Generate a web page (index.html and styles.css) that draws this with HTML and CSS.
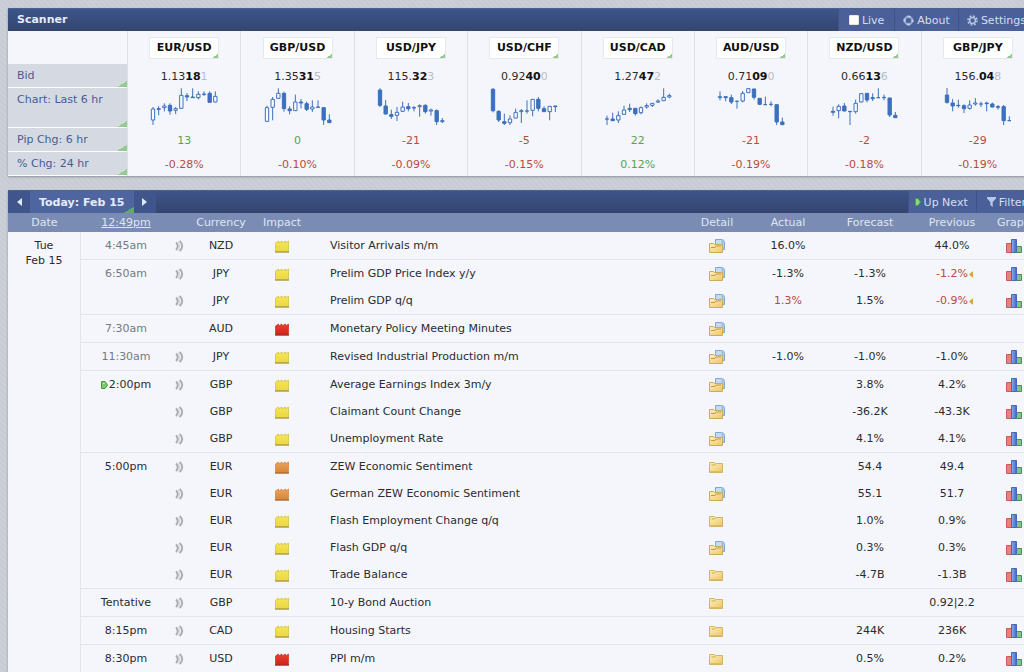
FILE: index.html
```html
<!DOCTYPE html>
<html lang="en">
<head>
<meta charset="utf-8">
<title>Economic Calendar</title>
<link rel="stylesheet" href="styles.css">
</head>
<body>
<svg class="defs" aria-hidden="true">
  <defs>
    <linearGradient id="g-folder" x1="0" y1="0" x2="1" y2="1"><stop offset="0" stop-color="#fdf0bd"/><stop offset="1" stop-color="#ecc765"/></linearGradient>
    <linearGradient id="g-low" x1="0" y1="0" x2="0" y2="1"><stop offset="0" stop-color="#f8ee7c"/><stop offset=".3" stop-color="#f2e24c"/><stop offset="1" stop-color="#e9d648"/></linearGradient>
    <linearGradient id="g-med" x1="0" y1="0" x2="0" y2="1"><stop offset="0" stop-color="#eda35c"/><stop offset="1" stop-color="#d98436"/></linearGradient>
    <linearGradient id="g-high" x1="0" y1="0" x2="0" y2="1"><stop offset="0" stop-color="#ea4034"/><stop offset="1" stop-color="#cf2318"/></linearGradient>
    <linearGradient id="g-blue" x1="0" y1="0" x2="1" y2="0"><stop offset="0" stop-color="#8fb0f0"/><stop offset="1" stop-color="#3f65c6"/></linearGradient>
    <symbol id="low" viewBox="0 0 14 13"><path d="M.5 3 3.500 1v2L7 1v2l3.500-2v2l3-2V12H.5z" fill="url(#g-low)" stroke="#d3c24a" stroke-width=".8"/><path d="M0 12h14" stroke="#96893a"/></symbol>
    <symbol id="med" viewBox="0 0 14 13"><path d="M.5 3 3.500 1v2L7 1v2l3.500-2v2l3-2V12H.5z" fill="url(#g-med)" stroke="#d08a48" stroke-width=".8"/><path d="M0 12h14" stroke="#96602c"/></symbol>
    <symbol id="high" viewBox="0 0 14 13"><path d="M.5 3 3.500 1v2L7 1v2l3.500-2v2l3-2V12H.5z" fill="url(#g-high)" stroke="#d2372b" stroke-width=".8"/><path d="M0 12h14" stroke="#8f2a22"/></symbol>
    <symbol id="sound" viewBox="0 0 9 12"><path d="M1 2.500q3.500 3.500 0 7.500M4.700.8q5 5.200 0 10.400" fill="none" stroke="#a9abb0" stroke-width="1.900"/><path d="M3 1.800q3.400 4.200 0 8.600" fill="none" stroke="#d0d2d6"/></symbol>
    <symbol id="folder" viewBox="0 0 16 16"><path d="M.5 13.500v-10h5l1 1h7v9z" fill="url(#g-folder)" stroke="#d2b268"/><path d="M2.500 6h3l1-1" fill="none" stroke="#c9a657"/><path d="M1.500 12.500h11" stroke="#e0b95a"/></symbol>
    <symbol id="folder-doc" viewBox="0 0 16 16"><path d="M6.500 1.500h6q3 0 3 3v7h-9z" fill="#c3dcf5" stroke="#87a5cc"/><path d="M13.500 2v9" stroke="#9cbce2" stroke-width="2"/><path d="M.5 14.500v-9h4l1 1h8v8z" fill="url(#g-folder)" stroke="#cda95c"/><path d="M2 9.500h4l1-1.500h5" fill="none" stroke="#bf9a4c"/></symbol>
    <symbol id="graph" viewBox="0 0 16 14"><path d="M.5 4.500h5v9h-5z" fill="#e4827f" stroke="#c95a5b"/><path d="M10.500 7.500h5v6h-5z" fill="#83c28d" stroke="#4f8a62"/><path d="M5.500.5h5v13h-5z" fill="url(#g-blue)" stroke="#4568b8"/></symbol>
    <symbol id="up-next" viewBox="0 0 7 8"><path d="M.5.500H4L6.500 4 4 7.500H.500z" fill="#7cc96a" stroke="#459c3d"/><path d="M2 2.500h1.500" stroke="#d4f0cb"/></symbol>
    <symbol id="revised" viewBox="0 0 4 7"><path d="M4 0v7L0 3.500z" fill="#dba141"/></symbol>
  </defs>
</svg>

<main class="page">
  <section class="panel">
    <header class="bar">
      <h2 class="bar-title">Scanner</h2>
      <div class="bar-actions">
        <label class="action action-live"><input type="checkbox" class="tick">Live</label>
        <button type="button" class="action"><svg class="glyph" viewBox="0 0 12 12"><circle cx="6" cy="6" r="4" fill="none" stroke="#8fa4d0" stroke-width="2.500"/><circle cx="6" cy="6" r="4.500" fill="none" stroke="#c3d0ea" stroke-width="2" stroke-dasharray="3.500 3.568" stroke-dashoffset="1.750"/></svg>About</button>
        <button type="button" class="action"><svg class="glyph" viewBox="0 0 12 12"><circle cx="6" cy="6" r="3.200" fill="none" stroke="#b9c8e6" stroke-width="1.600"/><circle cx="6" cy="6" r="5" fill="none" stroke="#b9c8e6" stroke-width="1.600" stroke-dasharray="2 1.927"/></svg>Settings</button>
      </div>
    </header>
    <table class="scanner" id="scanner"></table>
  </section>

  <section class="panel">
    <header class="bar">
      <div class="days">
        <button type="button" class="step" aria-label="Previous day"><svg class="arrow" viewBox="0 0 5 8"><path d="M5 0v8L0 4z" fill="#dfeaff"/></svg></button>
        <button type="button" class="today">Today: Feb 15</button>
        <button type="button" class="step" aria-label="Next day"><svg class="arrow" viewBox="0 0 5 8"><path d="M0 0v8l5-4z" fill="#dfeaff"/></svg></button>
      </div>
      <div class="bar-actions">
        <button type="button" class="action action-next"><svg class="play" viewBox="0 0 6 8"><path d="M.5.500H3L5.500 4 3 7.500H.500z" fill="#8ed67c" stroke="#4e9c50"/></svg>Up Next</button>
        <button type="button" class="action action-filter"><svg class="funnel" viewBox="0 0 9 10"><path d="M0 0h9v1.500L5.700 5v5L3.300 8V5L0 1.500z" fill="#b5c8e8"/></svg>Filter</button>
      </div>
    </header>
    <table class="calendar">
      <colgroup>
        <col class="c-date"><col class="c-time"><col class="c-sound"><col class="c-currency"><col class="c-impact"><col><col class="c-detail"><col class="c-actual"><col class="c-forecast"><col class="c-previous"><col class="c-graph">
      </colgroup>
      <thead>
        <tr><th>Date</th><th><a href="#time" class="clock">12:49pm</a></th><th></th><th>Currency</th><th>Impact</th><th></th><th>Detail</th><th>Actual</th><th>Forecast</th><th>Previous</th><th class="graph">Graph</th></tr>
      </thead>
      <tbody id="events"></tbody>
    </table>
  </section>
</main>
<script src="script.js"></script>
</body>
</html>
```

FILE: styles.css
```css
* { box-sizing: border-box; }

html { overflow: hidden; }

body {
  margin: 0;
  overflow: hidden;
  font: 11px/15px Verdana, "DejaVu Sans", sans-serif;
  color: #2b2b2f;
  background: repeating-linear-gradient(45deg, #c7cbd2 0 2px, #cccfd7 2px 4px);
}

.defs { position: absolute; width: 0; height: 0; }

.page {
  display: flex;
  flex-direction: column;
  gap: 14px;
  margin-right: -10px;
  padding: 8px 0 0 8px;
}

.panel {
  background: #f4f6fb;
  box-shadow: 0 1px 2px #8c919c;
}

button {
  font: inherit;
  color: inherit;
  border: 0;
  padding: 0;
  cursor: pointer;
}

table { border-collapse: separate; border-spacing: 0; table-layout: fixed; width: 100%; }
th, td { padding: 0; text-align: center; font-weight: normal; }

/* Panel title bars */
.bar {
  display: flex;
  justify-content: space-between;
  height: 23px;
  background: linear-gradient(#3c5588, #35456f);
  border-top: 1px solid #4a6292;
  color: #e4ecfa;
}
.bar-title { margin: 0; padding-left: 9px; font-size: 11px; line-height: 21px; }
.bar-actions, .days { display: flex; }
.action {
  display: flex;
  align-items: center;
  gap: 3px;
  padding: 0 8px;
  background: #4b6098;
  border-left: 1px solid #3f5286;
  color: #d3def2;
}
.action-live { padding: 0 10px; }
.tick {
  appearance: none;
  width: 10px;
  height: 10px;
  margin: 0;
  background: #fff;
  border: 1px solid #ece5dc;
  border-radius: 1px;
}
.glyph { width: 11px; height: 11px; }
.play { width: 6px; height: 8px; }
.funnel { width: 9px; height: 10px; }
.action-next { padding: 0 8px 0 6px; }
.action-filter { padding-left: 10px; }
.step {
  display: grid;
  place-items: center;
  width: 22px;
  background: #40558b;
}
.arrow { width: 5px; height: 8px; }
.today {
  padding: 0 9px;
  font-weight: bold;
  background: linear-gradient(to bottom right, transparent 50%, #5fae5c 50%) right bottom / 11px 6px no-repeat, #4f659f;
}

/* Currency scanner */
.scanner .label {
  width: 119px;
  padding-left: 9px;
  text-align: left;
  vertical-align: top;
  line-height: 23px;
  color: #475c96;
  background: linear-gradient(to bottom right, transparent 50%, #92cb8d 50%) right bottom / 10px 6px no-repeat, #d5d9e2;
  background-clip: padding-box;
  border-bottom: 1px solid #fff;
}
.scanner td { border-left: 1px solid #dcdfe6; height: 24px; }
.scanner .pairs td { height: 33px; }
.scanner .charts td { height: 40px; vertical-align: top; }
.pair {
  width: 70px;
  height: 22px;
  font-weight: bold;
  color: #111;
  border: 1px solid #e6e8ed;
  background: linear-gradient(to bottom right, transparent 50%, #92cb8d 50%) right bottom / 6px 4px no-repeat, #fff;
}
.bid b { color: #111; }
.bid i { font-style: normal; color: #b9bcc2; }
.chart { display: block; width: 70px; height: 38px; margin: 0 auto; }
.chart path { stroke: #3c70bf; stroke-width: 3; }
.chart .solid { fill: #3c70bf; }
.chart .hollow { fill: #fff; }
.up { color: #5ba24f; }
.down { color: #b84a42; }

/* Event calendar */
.c-date { width: 73px; }
.c-time { width: 90px; }
.c-sound { width: 16px; }
.c-currency { width: 68px; }
.c-impact { width: 54px; }
.c-detail { width: 52px; }
.c-actual { width: 90px; }
.c-forecast { width: 74px; }
.c-previous { width: 90px; }
.c-graph { width: 37px; }
.calendar th { height: 19px; background: #7a8cb3; color: #dfe6f3; }
.clock { color: inherit; }
.calendar td { height: 27px; }
.calendar tr.last td { height: 28px; border-bottom: 1px solid #e1e4ea; }
.calendar td.date, .calendar tr.last td.date {
  padding-top: 6px;
  vertical-align: top;
  border-right: 1px solid #e1e4ea;
}
.calendar td.event { padding-left: 21px; text-align: left; }
.calendar .graph { padding-right: 4px; }
.past { color: #77797f; }
.calendar svg { vertical-align: middle; }
.i-impact { width: 14px; height: 13px; }
.i-sound { width: 9px; height: 12px; }
.i-detail { width: 16px; height: 16px; }
.i-graph { width: 16px; height: 14px; }
.i-next { width: 7px; height: 8px; margin-right: 1px; }
.i-revised { width: 4px; height: 7px; margin: 0 -5px 0 1px; }
```

FILE: script.js
```js
// Candles: type (h = hollow, s = solid), body top, body bottom, wick top, wick bottom.
const pairs = [
  ["EUR/USD", "1.13", "18", "1", "13", "-0.28%", "h325,360,320,374 s324,328,318,345 h316,323,309,333 s314,333,309,343 h324,331,320,341 h284,325,264,325 s285,291,278,302 s289,293,264,293 h281,293,273,297 s280,283,273,287 s278,307,273,307 h287,306,273,306"],
  ["GBP/USD", "1.35", "31", "5", "0", "-0.10%", "h321,364,316,364 h296,322,290,360 h278,295,264,295 s278,326,274,334 s325,332,318,342 h304,332,283,332 s304,309,296,324 s309,328,304,332 h319,327,300,335 s319,322,300,322 s321,360,321,374 s358,368,342,368"],
  ["USD/JPY", "115.", "32", "3", "-21", "-0.09%", "s268,316,264,320 s316,342,299,342 s342,349,328,356 h335,346,320,362 h319,334,304,334 s318,326,308,333 s321,324,317,333 h315,320,312,349 s314,335,312,340 h328,333,325,346 s330,365,327,374 h360,365,353,368"],
  ["USD/CHF", "0.92", "40", "0", "-5", "-0.15%", "s266,332,263,336 s332,360,330,365 s363,370,340,374 h355,368,345,374 h335,354,325,354 h330,335,326,368 s331,333,300,340 h296,331,296,348 s296,325,290,333 s324,335,318,335 h317,335,317,360 s316,320,316,335"],
  ["USD/CAD", "1.27", "47", "2", "22", "0.12%", "s355,357,346,374 s355,362,337,362 h345,360,333,368 h328,343,316,343 s323,329,310,335 s323,341,323,346 h321,338,318,342 h315,321,309,325 h308,316,308,320 h301,306,297,308 h290,302,264,302 h285,291,280,294"],
  ["AUD/USD", "0.71", "09", "0", "-21", "-0.19%", "h288,293,273,300 s288,293,288,303 s291,306,283,311 s302,304,300,325 h278,303,272,306 h264,278,264,278 s265,292,265,298 s293,313,293,313 s312,314,289,314 s311,313,303,318 s312,366,312,374 s364,374,352,374"],
  ["NZD/USD", "0.66", "13", "6", "-2", "-0.18%", "s332,337,319,346 h317,332,312,354 s316,333,308,333 s332,335,332,374 h308,335,298,340 h279,306,279,306 s278,300,278,306 s291,296,279,302 s291,293,264,293 s290,293,283,300 s292,345,292,350 s344,353,335,353"],
  ["GBP/JPY", "156.", "04", "8", "-29", "-0.19%", "s283,307,263,310 s307,318,296,333 s314,317,298,322 s315,326,312,338 h313,325,300,328 h307,312,293,316 s310,312,304,320 s307,311,304,333 s310,321,307,321 s318,322,314,328 s318,362,314,374 s360,362,348,362"]
];

function chart(data) {
  const wicks = [], solid = [], hollow = [];
  data.split(" ").forEach((candle, i) => {
    const [top, bottom, high, low] = candle.slice(1).split(",").map(Number);
    const x = 12 + 17 * i;
    wicks.push(`M${x} ${high}V${low}`);
    const body = candle[0] === "h" ? hollow : solid;
    body.push(`M${x - 5} ${top + 1}h10V${bottom - 1}h-10z`);
  });
  return `<svg class="chart" viewBox="0 263 210 114" aria-hidden="true"><path d="${wicks.join("")}"/><path class="solid" d="${solid.join("")}"/><path class="hollow" d="${hollow.join("")}"/></svg>`;
}

const tone = v => (v.startsWith("-") ? "down" : "up");
const row = (cls, label, cell) =>
  `<tr class="${cls}">${label ? `<th scope="row" class="label">${label}</th>` : "<th></th>"}${pairs.map(p => `<td>${cell(p)}</td>`).join("")}</tr>`;

document.getElementById("scanner").innerHTML =
  "<colgroup><col style='width:119px'></colgroup>" +
  row("pairs", "", p => `<button type="button" class="pair">${p[0]}</button>`) +
  row("bid", "Bid", p => `${p[1]}<b>${p[2]}</b><i>${p[3]}</i>`) +
  row("charts", "Chart: Last 6 hr", p => chart(p[6])) +
  row("pips", "Pip Chg: 6 hr", p => `<span class="${tone(p[4])}">${p[4]}</span>`) +
  row("change", "% Chg: 24 hr", p => `<span class="${tone(p[5])}">${p[5]}</span>`);

// time, sound, currency, impact, event, detail, actual, forecast, previous, graph, last row of its time slot
const events = [
  ["4:45am", 1, "NZD", "low", "Visitor Arrivals m/m", "folder-doc", "16.0%", "", "44.0%", 1, 1],
  ["6:50am", 1, "JPY", "low", "Prelim GDP Price Index y/y", "folder-doc", "-1.3%", "-1.3%", "!-1.2%", 1, 0],
  ["", 1, "JPY", "low", "Prelim GDP q/q", "folder-doc", "!1.3%", "1.5%", "!-0.9%", 1, 1],
  ["7:30am", 0, "AUD", "high", "Monetary Policy Meeting Minutes", "folder-doc", "", "", "", 0, 1],
  ["11:30am", 1, "JPY", "low", "Revised Industrial Production m/m", "folder-doc", "-1.0%", "-1.0%", "-1.0%", 1, 1],
  ["2:00pm", 1, "GBP", "low", "Average Earnings Index 3m/y", "folder-doc", "", "3.8%", "4.2%", 1, 0],
  ["", 1, "GBP", "low", "Claimant Count Change", "folder-doc", "", "-36.2K", "-43.3K", 1, 0],
  ["", 1, "GBP", "low", "Unemployment Rate", "folder-doc", "", "4.1%", "4.1%", 1, 1],
  ["5:00pm", 1, "EUR", "med", "ZEW Economic Sentiment", "folder", "", "54.4", "49.4", 1, 0],
  ["", 1, "EUR", "med", "German ZEW Economic Sentiment", "folder-doc", "", "55.1", "51.7", 1, 0],
  ["", 1, "EUR", "low", "Flash Employment Change q/q", "folder", "", "1.0%", "0.9%", 1, 0],
  ["", 1, "EUR", "low", "Flash GDP q/q", "folder-doc", "", "0.3%", "0.3%", 1, 0],
  ["", 1, "EUR", "low", "Trade Balance", "folder", "", "-4.7B", "-1.3B", 1, 1],
  ["Tentative", 1, "GBP", "low", "10-y Bond Auction", "folder", "", "", "0.92|2.2", 0, 1],
  ["8:15pm", 1, "CAD", "low", "Housing Starts", "folder", "", "244K", "236K", 1, 1],
  ["8:30pm", 1, "USD", "high", "PPI m/m", "folder", "", "0.5%", "0.2%", 1, 1]
];

const icon = (id, cls) => `<svg class="${cls}" aria-hidden="true"><use href="#${id}"/></svg>`;
const value = v => (v[0] === "!" ? `<span class="down">${v.slice(1)}</span>` : v);

document.getElementById("events").innerHTML = events.map((e, i) => {
  const [time, sound, currency, impact, name, detail, actual, forecast, previous, graph, last] = e;
  return `<tr class="${last ? "last" : ""}">` +
    (i === 0 ? `<td class="date" rowspan="${events.length}">Tue<br>Feb 15</td>` : "") +
    `<td class="${time.endsWith("am") ? "past" : ""}">${time === "2:00pm" ? icon("up-next", "i-next") : ""}${time}</td>` +
    `<td>${sound ? icon("sound", "i-sound") : ""}</td>` +
    `<td>${currency}</td>` +
    `<td>${icon(impact, "i-impact")}</td>` +
    `<td class="event">${name}</td>` +
    `<td>${icon(detail, "i-detail")}</td>` +
    `<td>${value(actual)}</td>` +
    `<td>${value(forecast)}</td>` +
    `<td>${value(previous)}${previous[0] === "!" ? icon("revised", "i-revised") : ""}</td>` +
    `<td class="graph">${graph ? icon("graph", "i-graph") : ""}</td></tr>`;
}).join("");
```
